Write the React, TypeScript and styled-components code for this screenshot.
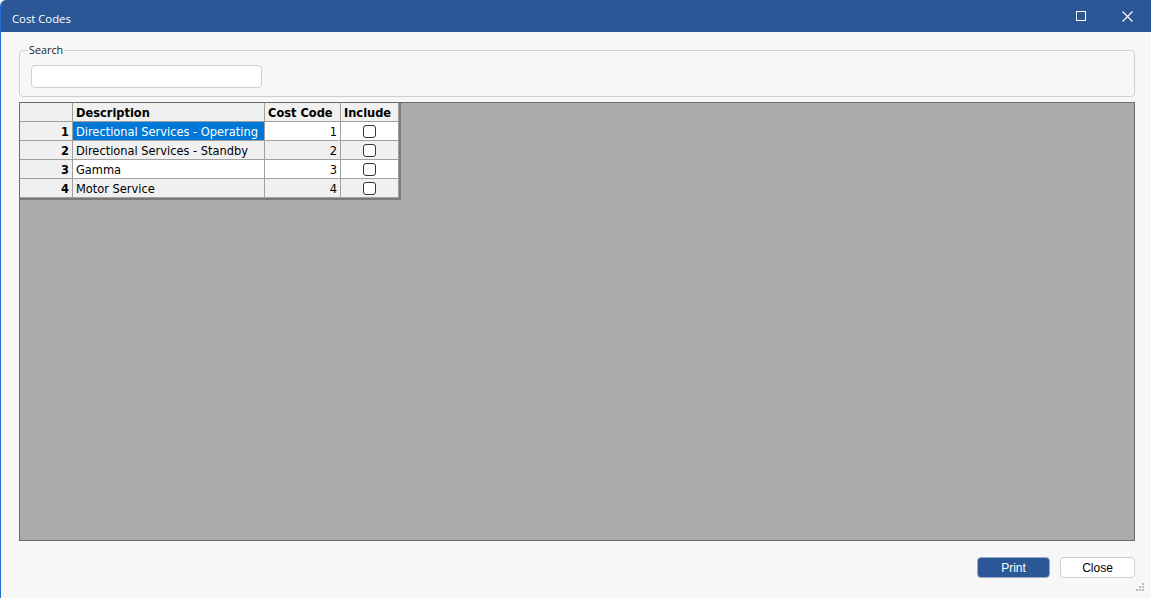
import React from "react";
import styled, { createGlobalStyle } from "styled-components";

const Global = createGlobalStyle`
  html, body { margin: 0; padding: 0; background: #f7f7f7; }
  #root { width: 1151px; height: 598px; }
  * { box-sizing: border-box; }
`;

const Window = styled.div`
  width: 1151px;
  height: 598px;
  display: flex;
  flex-direction: column;
  background: #f7f7f7;
  border-left: 1px solid #1e6fd0;
  border-top-left-radius: 6px;
  overflow: hidden;
  font-family: "Open Sans", "Noto Sans", sans-serif;
`;

const TitleBar = styled.div`
  height: 32px;
  flex: none;
  background: #2b5797;
  display: flex;
  align-items: center;
  padding-left: 11px;
  padding-right: 1px;
  color: #fff;
  font-size: 11.3px;
`;

const Title = styled.div`
  flex: 1;
  margin-top: 4px;
`;

const TitleButton = styled.div`
  width: 46px;
  height: 32px;
  display: flex;
  align-items: center;
  justify-content: center;
`;

const Content = styled.div`
  flex: 1;
  display: flex;
  flex-direction: column;
  padding: 11px 16px 0 18px;
`;

const GroupBox = styled.fieldset`
  margin: 0;
  height: 54px;
  border: 1px solid #cfcfcf;
  border-radius: 4px;
  padding: 0 0 0 11px;
`;

const Legend = styled.legend`
  font-size: 10.8px;
  color: #222;
  padding: 0 1px;
  margin-left: -3px;
  line-height: 14px;
`;

const SearchInput = styled.div`
  width: 231px;
  height: 23px;
  margin-top: 8px;
  background: #fff;
  border: 1px solid #cfcfcf;
  border-radius: 4px;
`;

const GridArea = styled.div`
  margin-top: 5px;
  height: 439px;
  background: #ababab;
  border: 1px solid #6b6b6b;
  display: flex;
  align-items: flex-start;
`;

const Table = styled.div`
  display: grid;
  grid-template-columns: 53px 192px 76px 58px;
  border-right: 2px solid #7a7a7a;
  border-bottom: 2px solid #7a7a7a;
  background: #a0a0a0;
`;

const Cell = styled.div<{ $bg?: string; $align?: string; $bold?: boolean; $color?: string }>`
  height: 19px;
  background: ${(p) => p.$bg || "#fff"};
  color: ${(p) => p.$color || "#000"};
  font-weight: ${(p) => (p.$bold ? 700 : 400)};
  font-size: 12.7px;
  font-family: "DejaVu Sans Condensed", "DejaVu Sans", sans-serif;
  display: flex;
  align-items: center;
  justify-content: ${(p) => p.$align || "flex-start"};
  padding: 0 3px 0 3px;
  border-right: 1px solid #a0a0a0;
  border-bottom: 1px solid #a0a0a0;
  white-space: nowrap;
  overflow: hidden;
`;

const Check = styled.div`
  width: 13px;
  height: 13px;
  border: 1px solid #333;
  border-radius: 3px;
  background: #fff;
`;

const Footer = styled.div`
  height: 57px;
  display: flex;
  justify-content: flex-end;
  align-items: flex-start;
  padding-top: 16px;
  gap: 10px;
  position: relative;
`;

const Button = styled.div<{ $primary?: boolean }>`
  width: ${(p) => (p.$primary ? "73px" : "75px")};
  height: 21px;
  border-radius: 4px;
  display: flex;
  align-items: center;
  justify-content: center;
  font-family: "Liberation Sans", Arial, sans-serif;
  font-size: 12px;
  background: ${(p) => (p.$primary ? "#2b5797" : "#fff")};
  color: ${(p) => (p.$primary ? "#fff" : "#000")};
  border: 1px solid ${(p) => (p.$primary ? "#9aa9c4" : "#cfcfcf")};
`;

const Grip = styled.svg`
  position: absolute;
  right: -9px;
  bottom: 7px;
`;

const rows = [
  { n: 1, d: "Directional Services - Operating", c: 1 },
  { n: 2, d: "Directional Services - Standby", c: 2 },
  { n: 3, d: "Gamma", c: 3 },
  { n: 4, d: "Motor Service", c: 4 },
];

export default function App() {
  return (
    <>
      <Global />
      <Window>
        <TitleBar>
          <Title>Cost Codes</Title>
          <TitleButton>
            <svg width="10" height="10" viewBox="0 0 10 10">
              <rect x="0.5" y="0.5" width="9" height="9" fill="none" stroke="#fff" strokeWidth="1" />
            </svg>
          </TitleButton>
          <TitleButton>
            <svg width="11" height="11" viewBox="0 0 11 11">
              <path d="M0.5 0.5 L10.5 10.5 M10.5 0.5 L0.5 10.5" stroke="#fff" strokeWidth="1.1" />
            </svg>
          </TitleButton>
        </TitleBar>
        <Content>
          <GroupBox>
            <Legend>Search</Legend>
            <SearchInput />
          </GroupBox>
          <GridArea>
            <Table>
              <Cell $bg="#f0f0f0" />
              <Cell $bg="#f0f0f0" $bold>Description</Cell>
              <Cell $bg="#f0f0f0" $bold>Cost Code</Cell>
              <Cell $bg="#f0f0f0" $bold>Include</Cell>
              {rows.map((r, i) => {
                const bg = i % 2 === 1 ? "#f0f0f0" : "#fff";
                const sel = i === 0;
                return (
                  <React.Fragment key={r.n}>
                    <Cell $bg="#f0f0f0" $bold $align="flex-end">{r.n}</Cell>
                    <Cell $bg={sel ? "#0078d7" : bg} $color={sel ? "#fff" : "#000"}>{r.d}</Cell>
                    <Cell $bg={bg} $align="flex-end">{r.c}</Cell>
                    <Cell $bg={bg} $align="center"><Check /></Cell>
                  </React.Fragment>
                );
              })}
            </Table>
          </GridArea>
          <Footer>
            <Button $primary>Print</Button>
            <Button>Close</Button>
            <Grip width="8" height="8" viewBox="0 0 8 8">
              <rect x="6" y="0" width="2" height="2" fill="#bbb" />
              <rect x="3" y="3" width="2" height="2" fill="#bbb" />
              <rect x="6" y="3" width="2" height="2" fill="#bbb" />
              <rect x="0" y="6" width="2" height="2" fill="#bbb" />
              <rect x="3" y="6" width="2" height="2" fill="#bbb" />
              <rect x="6" y="6" width="2" height="2" fill="#bbb" />
            </Grip>
          </Footer>
        </Content>
      </Window>
    </>
  );
}
